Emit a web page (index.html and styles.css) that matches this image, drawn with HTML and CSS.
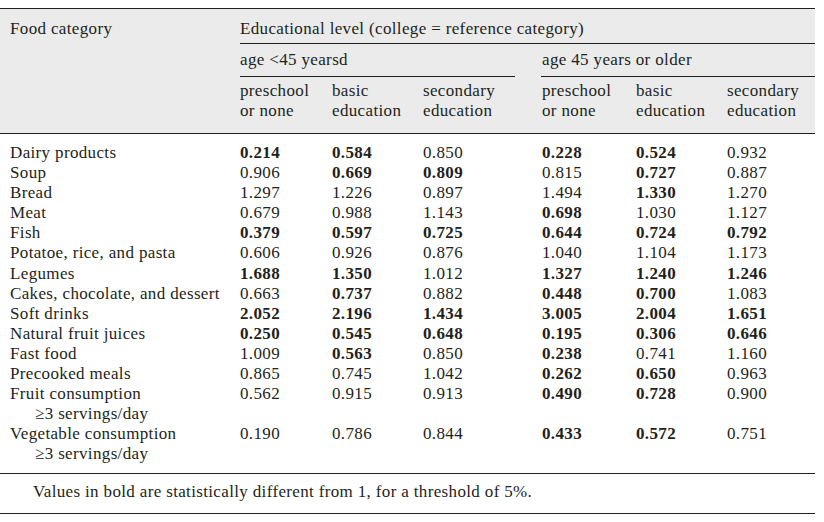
FILE: index.html
```html
<!DOCTYPE html>
<html lang="en">
<head>
<meta charset="utf-8">
<title>Food category by educational level</title>
<link rel="stylesheet" href="styles.css">
</head>
<body>
<table class="tbl">
  <colgroup>
    <col class="c-cat"><col class="c-a1"><col class="c-a2"><col class="c-a3"><col class="c-gap"><col class="c-b1"><col class="c-b2"><col class="c-b3">
  </colgroup>
  <thead>
    <tr class="h1">
      <th class="cat" rowspan="3">Food category</th>
      <th class="rule" colspan="7">Educational level (college = reference category)</th>
    </tr>
    <tr class="h2">
      <th class="rule" colspan="3">age &lt;45 yearsd</th>
      <th></th>
      <th class="rule b" colspan="3">age 45 years or older</th>
    </tr>
    <tr class="h3">
      <th>preschool<br>or none</th>
      <th>basic<br>education</th>
      <th>secondary<br>education</th>
      <th></th>
      <th class="b">preschool<br>or none</th>
      <th>basic<br>education</th>
      <th>secondary<br>education</th>
    </tr>
  </thead>
  <tbody>
    <tr class="first"><td class="cat">Dairy products</td><td class="s">0.214</td><td class="s">0.584</td><td>0.850</td><td></td><td class="b s">0.228</td><td class="s">0.524</td><td>0.932</td></tr>
    <tr><td class="cat">Soup</td><td>0.906</td><td class="s">0.669</td><td class="s">0.809</td><td></td><td class="b">0.815</td><td class="s">0.727</td><td>0.887</td></tr>
    <tr><td class="cat">Bread</td><td>1.297</td><td>1.226</td><td>0.897</td><td></td><td class="b">1.494</td><td class="s">1.330</td><td>1.270</td></tr>
    <tr><td class="cat">Meat</td><td>0.679</td><td>0.988</td><td>1.143</td><td></td><td class="b s">0.698</td><td>1.030</td><td>1.127</td></tr>
    <tr><td class="cat">Fish</td><td class="s">0.379</td><td class="s">0.597</td><td class="s">0.725</td><td></td><td class="b s">0.644</td><td class="s">0.724</td><td class="s">0.792</td></tr>
    <tr><td class="cat">Potatoe, rice, and pasta</td><td>0.606</td><td>0.926</td><td>0.876</td><td></td><td class="b">1.040</td><td>1.104</td><td>1.173</td></tr>
    <tr><td class="cat">Legumes</td><td class="s">1.688</td><td class="s">1.350</td><td>1.012</td><td></td><td class="b s">1.327</td><td class="s">1.240</td><td class="s">1.246</td></tr>
    <tr><td class="cat">Cakes, chocolate, and dessert</td><td>0.663</td><td class="s">0.737</td><td>0.882</td><td></td><td class="b s">0.448</td><td class="s">0.700</td><td>1.083</td></tr>
    <tr><td class="cat">Soft drinks</td><td class="s">2.052</td><td class="s">2.196</td><td class="s">1.434</td><td></td><td class="b s">3.005</td><td class="s">2.004</td><td class="s">1.651</td></tr>
    <tr><td class="cat">Natural fruit juices</td><td class="s">0.250</td><td class="s">0.545</td><td class="s">0.648</td><td></td><td class="b s">0.195</td><td class="s">0.306</td><td class="s">0.646</td></tr>
    <tr><td class="cat">Fast food</td><td>1.009</td><td class="s">0.563</td><td>0.850</td><td></td><td class="b s">0.238</td><td>0.741</td><td>1.160</td></tr>
    <tr><td class="cat">Precooked meals</td><td>0.865</td><td>0.745</td><td>1.042</td><td></td><td class="b s">0.262</td><td class="s">0.650</td><td>0.963</td></tr>
    <tr><td class="cat">Fruit consumption<br><span class="ind">≥3 servings/day</span></td><td>0.562</td><td>0.915</td><td>0.913</td><td></td><td class="b s">0.490</td><td class="s">0.728</td><td>0.900</td></tr>
    <tr class="last"><td class="cat">Vegetable consumption<br><span class="ind">≥3 servings/day</span></td><td>0.190</td><td>0.786</td><td>0.844</td><td></td><td class="b s">0.433</td><td class="s">0.572</td><td>0.751</td></tr>
  </tbody>
  <tfoot>
    <tr><td class="note" colspan="8">Values in bold are statistically different from 1, for a threshold of 5%.</td></tr>
  </tfoot>
</table>
</body>
</html>
```

FILE: styles.css
```css
html, body {
  margin: 0;
  padding: 0;
  background: #ffffff;
}

body {
  font-family: "Liberation Serif", "Times New Roman", serif;
  font-size: 17px;
  letter-spacing: 0.35px;
  color: #231f20;
}

.tbl {
  margin-top: 8px;
  width: 815px;
  table-layout: fixed;
  border-collapse: separate;
  border-spacing: 0;
  border-top: 1px solid #231f20;
}

.c-cat { width: 240px; }
.c-a1 { width: 92px; }
.c-a2 { width: 91px; }
.c-a3 { width: 92px; }
.c-gap { width: 26px; }
.c-b1 { width: 95px; }
.c-b2 { width: 91px; }
.c-b3 { width: 88px; }

.tbl th,
.tbl td {
  padding: 0;
  text-align: left;
  vertical-align: top;
  font-weight: normal;
  line-height: 20px;
  white-space: nowrap;
}

.tbl thead th {
  background: #ebebeb;
}

.tbl th.cat,
.tbl td.cat {
  padding-left: 10px;
}

.tbl .b {
  padding-left: 1px;
}

.h1 th {
  padding-top: 10px;
  padding-bottom: 4px;
}

.h1 th.cat {
  border-bottom: 1px solid #231f20;
}

.h2 th {
  padding-top: 6px;
  padding-bottom: 6px;
}

.h3 th {
  padding-top: 4px;
  padding-bottom: 12px;
  border-bottom: 1px solid #231f20;
}

.tbl th.rule {
  border-bottom: 1px solid #231f20;
}

.tbl tbody td {
  line-height: 20.1px;
}

.tbl td.s {
  font-weight: bold;
}

.first td {
  padding-top: 9px;
}

.last td {
  padding-bottom: 8px;
  border-bottom: 1px solid #231f20;
}

.ind {
  padding-left: 25px;
}

.tbl td.note {
  padding: 8px 0 11px 33px;
  border-bottom: 1px solid #231f20;
}
```
